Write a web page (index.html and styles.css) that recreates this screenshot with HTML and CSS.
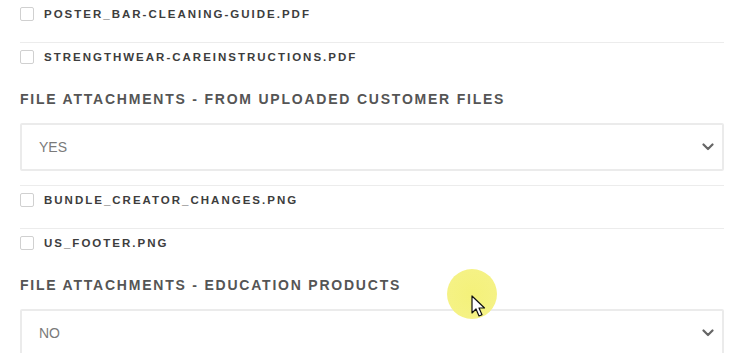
FILE: index.html
```html
<!DOCTYPE html>
<html lang="en">
<head>
<meta charset="utf-8">
<title>File attachments</title>
<link rel="stylesheet" href="styles.css">
</head>
<body>
<div class="page">
  <ul class="files first">
    <li class="file"><span class="box"></span><span class="name">POSTER_BAR-CLEANING-GUIDE.PDF</span></li>
    <li class="file"><span class="box"></span><span class="name">STRENGTHWEAR-CAREINSTRUCTIONS.PDF</span></li>
  </ul>
  <h3 class="heading">FILE ATTACHMENTS - FROM UPLOADED CUSTOMER FILES</h3>
  <div class="select">
    <span class="value">YES</span>
    <svg class="chev" width="12" height="8" viewBox="0 0 12 8"><polyline points="1.5,1.5 6,6 10.5,1.5" fill="none" stroke="#666" stroke-width="2.2" stroke-linecap="round" stroke-linejoin="round"/></svg>
  </div>
  <ul class="files">
    <li class="file"><span class="box"></span><span class="name">BUNDLE_CREATOR_CHANGES.PNG</span></li>
    <li class="file"><span class="box"></span><span class="name">US_FOOTER.PNG</span></li>
  </ul>
  <h3 class="heading">FILE ATTACHMENTS - EDUCATION PRODUCTS</h3>
  <div class="select">
    <span class="value">NO</span>
    <svg class="chev" width="12" height="8" viewBox="0 0 12 8"><polyline points="1.5,1.5 6,6 10.5,1.5" fill="none" stroke="#666" stroke-width="2.2" stroke-linecap="round" stroke-linejoin="round"/></svg>
  </div>
  <div class="pointer">
    <svg class="arrow" width="16" height="24" viewBox="0 0 16 24"><path d="M1 1 L1 18 L5 14 L8 21 L11 19.7 L8 13 L13.5 13 Z" fill="#fff" stroke="#111" stroke-width="1.2" stroke-linejoin="round"/></svg>
  </div>
</div>
</body>
</html>
```
FILE: styles.css
```css
html, body {
  margin: 0;
  padding: 0;
  background: #fff;
  overflow: hidden;
}
.page {
  position: relative;
  width: 740px;
  height: 354px;
  padding: 0 16px 0 20px;
  box-sizing: border-box;
  font-family: "Liberation Sans", Arial, sans-serif;
}
.files {
  list-style: none;
  margin: 14px 0 0;
  padding: 0;
}
.files.first {
  margin-top: -1px;
}
.file {
  display: flex;
  align-items: center;
  border-top: 1px solid #ececec;
  padding: 7px 0 21px;
  height: 14px;
}
.box {
  width: 12px;
  height: 12px;
  border: 1px solid #d0d0d0;
  border-radius: 2px;
  margin-right: 10px;
  flex: none;
}
.name {
  font-size: 11.5px;
  font-weight: bold;
  letter-spacing: 2px;
  color: #3d3d3d;
  line-height: 14px;
}
.heading {
  margin: 4px 0 0;
  font-size: 14px;
  line-height: 20px;
  font-weight: bold;
  letter-spacing: 1.78px;
  color: #555;
}
.select {
  margin-top: 14px;
  height: 48px;
  box-sizing: border-box;
  border: 2px solid #ebebeb;
  border-radius: 2px;
  display: flex;
  align-items: center;
  justify-content: space-between;
  padding: 0 8px 0 17px;
}
.value {
  font-size: 14px;
  color: #7a7a7a;
}
.chev {
  display: block;
}
.pointer {
  position: absolute;
  left: 447px;
  top: 270px;
  width: 50px;
  height: 50px;
  border-radius: 50%;
  background: radial-gradient(circle, #f4f17a 0%, #f5f286 78%, rgba(247,244,150,0.6) 92%, rgba(255,255,255,0) 100%);
}
.arrow {
  position: absolute;
  left: 24px;
  top: 26px;
}
```
